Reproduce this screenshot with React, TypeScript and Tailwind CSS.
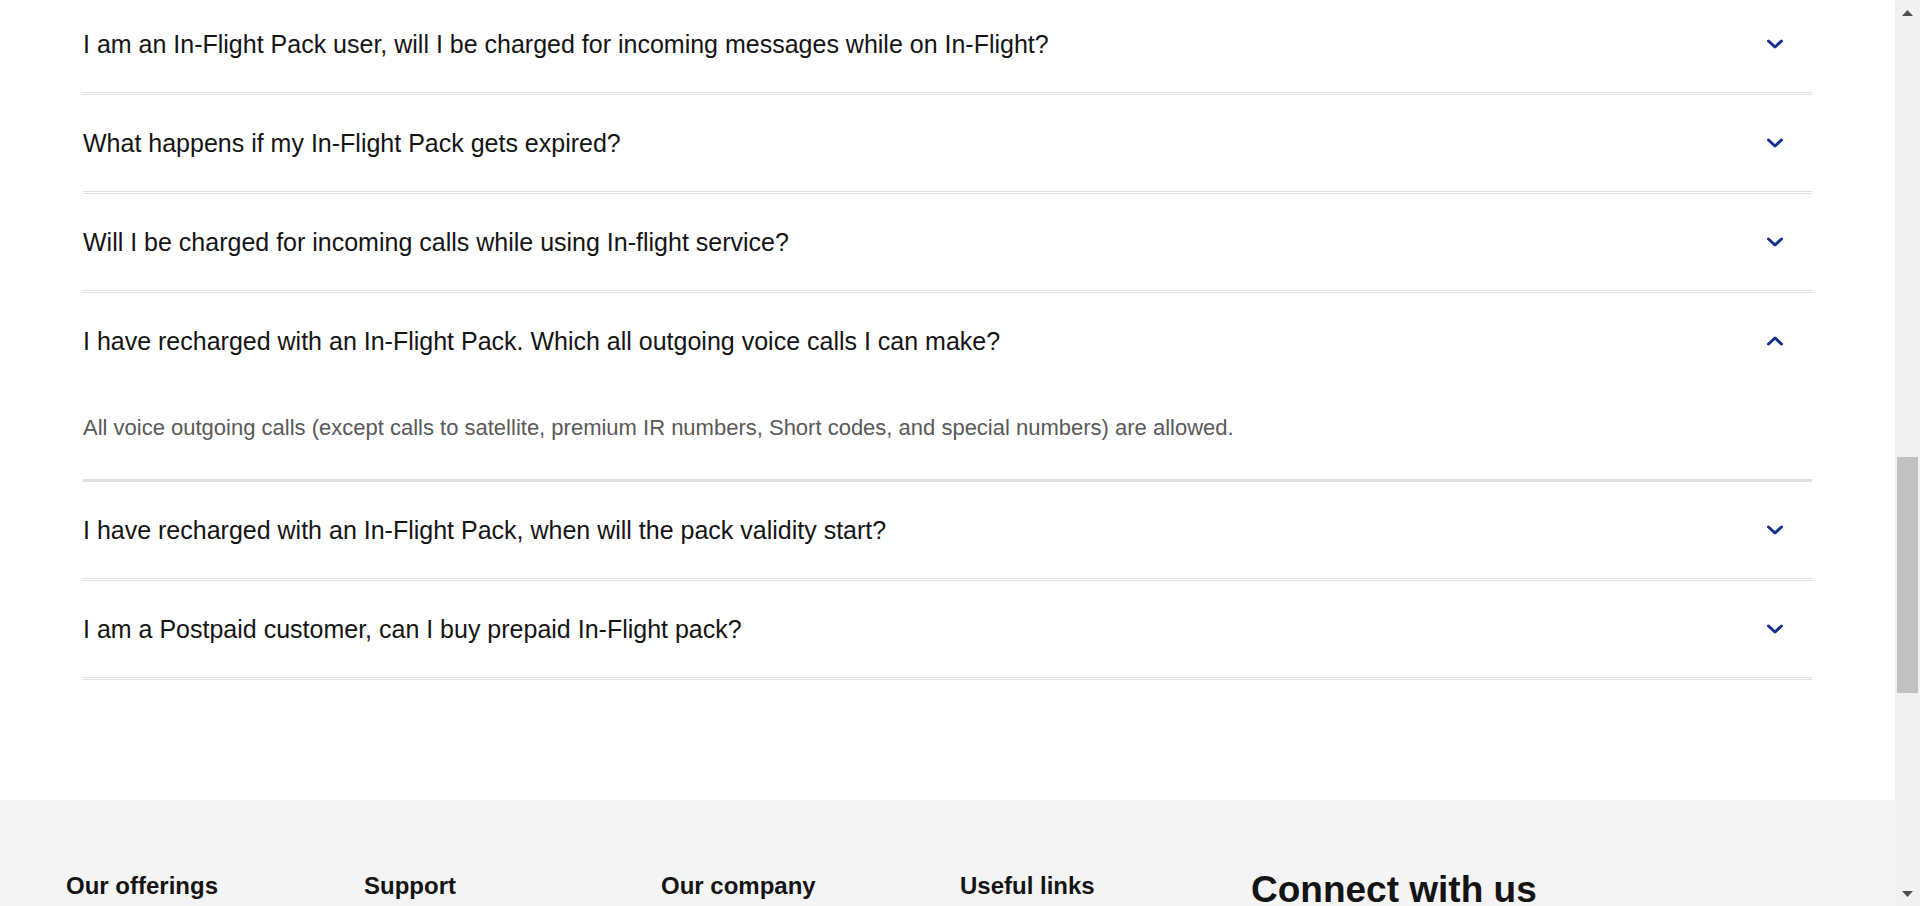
import { useState } from 'react';

interface Faq {
  question: string;
  answer: string;
}

const faqs: Faq[] = [
  {
    question: 'I am an In-Flight Pack user, will I be charged for incoming messages while on In-Flight?',
    answer: 'No, incoming SMS are free while you are on In-Flight.',
  },
  {
    question: 'What happens if my In-Flight Pack gets expired?',
    answer: 'Once the pack expires, you will not be able to use In-Flight services.',
  },
  {
    question: 'Will I be charged for incoming calls while using In-flight service?',
    answer: 'Incoming calls are charged as per the pack benefits.',
  },
  {
    question: 'I have recharged with an In-Flight Pack. Which all outgoing voice calls I can make?',
    answer:
      'All voice outgoing calls (except calls to satellite, premium IR numbers, Short codes, and special numbers) are allowed.',
  },
  {
    question: 'I have recharged with an In-Flight Pack, when will the pack validity start?',
    answer: 'The pack validity starts as soon as the pack is activated.',
  },
  {
    question: 'I am a Postpaid customer, can I buy prepaid In-Flight pack?',
    answer: 'No, prepaid In-Flight packs are available only for prepaid customers.',
  },
];

const footerColumns = ['Our offerings', 'Support', 'Our company', 'Useful links'];

function Chevron({ open }: { open: boolean }) {
  return (
    <svg width="18" height="10" viewBox="0 0 18 10" className={open ? 'rotate-180' : ''}>
      <path
        d="M2.5 2l6.5 6 6.5-6"
        fill="none"
        stroke="#12308f"
        strokeWidth="3"
        strokeLinecap="round"
        strokeLinejoin="round"
      />
    </svg>
  );
}

function FaqItem({ faq, open, onToggle }: { faq: Faq; open: boolean; onToggle: () => void }) {
  return (
    <div
      className={`border-b-[3px] border-[#e0e0e0] ${open ? 'border-solid' : 'border-double'}`}
    >
      <button
        className="flex h-[96px] w-full items-center justify-between text-left"
        onClick={onToggle}
      >
        <span className="text-[25px] leading-[28px] text-[#141414]">{faq.question}</span>
        <span className="mr-[28px] flex items-center">
          <Chevron open={open} />
        </span>
      </button>
      {open && (
        <div className="pt-[25px] pb-[37px] text-[22px] leading-[28px] text-[#595959]">
          {faq.answer}
        </div>
      )}
    </div>
  );
}

// Windows-style page scrollbar, as seen in the screenshot
function ScrollBar() {
  return (
    <div className="flex h-screen w-[25px] shrink-0 flex-col bg-[#f1f1f1]">
      <div className="flex h-[25px] items-center justify-center">
        <svg width="11" height="6" viewBox="0 0 11 6">
          <polygon points="5.5,0 11,6 0,6" fill="#505050" />
        </svg>
      </div>
      <div className="flex-1 pt-[432px]">
        <div className="mx-[2px] h-[236px] bg-[#c1c1c1]" />
      </div>
      <div className="flex h-[25px] items-center justify-center">
        <svg width="11" height="6" viewBox="0 0 11 6">
          <polygon points="0,0 11,0 5.5,6" fill="#505050" />
        </svg>
      </div>
    </div>
  );
}

export default function App() {
  const [openIndex, setOpenIndex] = useState<number | null>(3);

  return (
    <div
      className="flex h-screen w-full overflow-hidden bg-white"
      style={{ fontFamily: '"Liberation Sans", Arial, sans-serif' }}
    >
      <div className="h-screen flex-1 overflow-hidden">
        <section className="-mt-[4px] px-[83px] pb-[120px]">
          {faqs.map((faq, i) => (
            <FaqItem
              key={faq.question}
              faq={faq}
              open={openIndex === i}
              onToggle={() => setOpenIndex(openIndex === i ? null : i)}
            />
          ))}
        </section>

        <footer className="bg-[#f4f4f4] pt-[70px] pl-[66px] pb-[60px]">
          <div className="grid grid-cols-[298px_297px_299px_291px_1fr] items-start">
            {footerColumns.map((title) => (
              <h3 key={title} className="text-[24px] leading-[32px] font-bold text-[#141414]">
                {title}
              </h3>
            ))}
            <h2 className="text-[37px] leading-[40px] font-bold text-[#141414]">Connect with us</h2>
          </div>
        </footer>
      </div>
      <ScrollBar />
    </div>
  );
}
